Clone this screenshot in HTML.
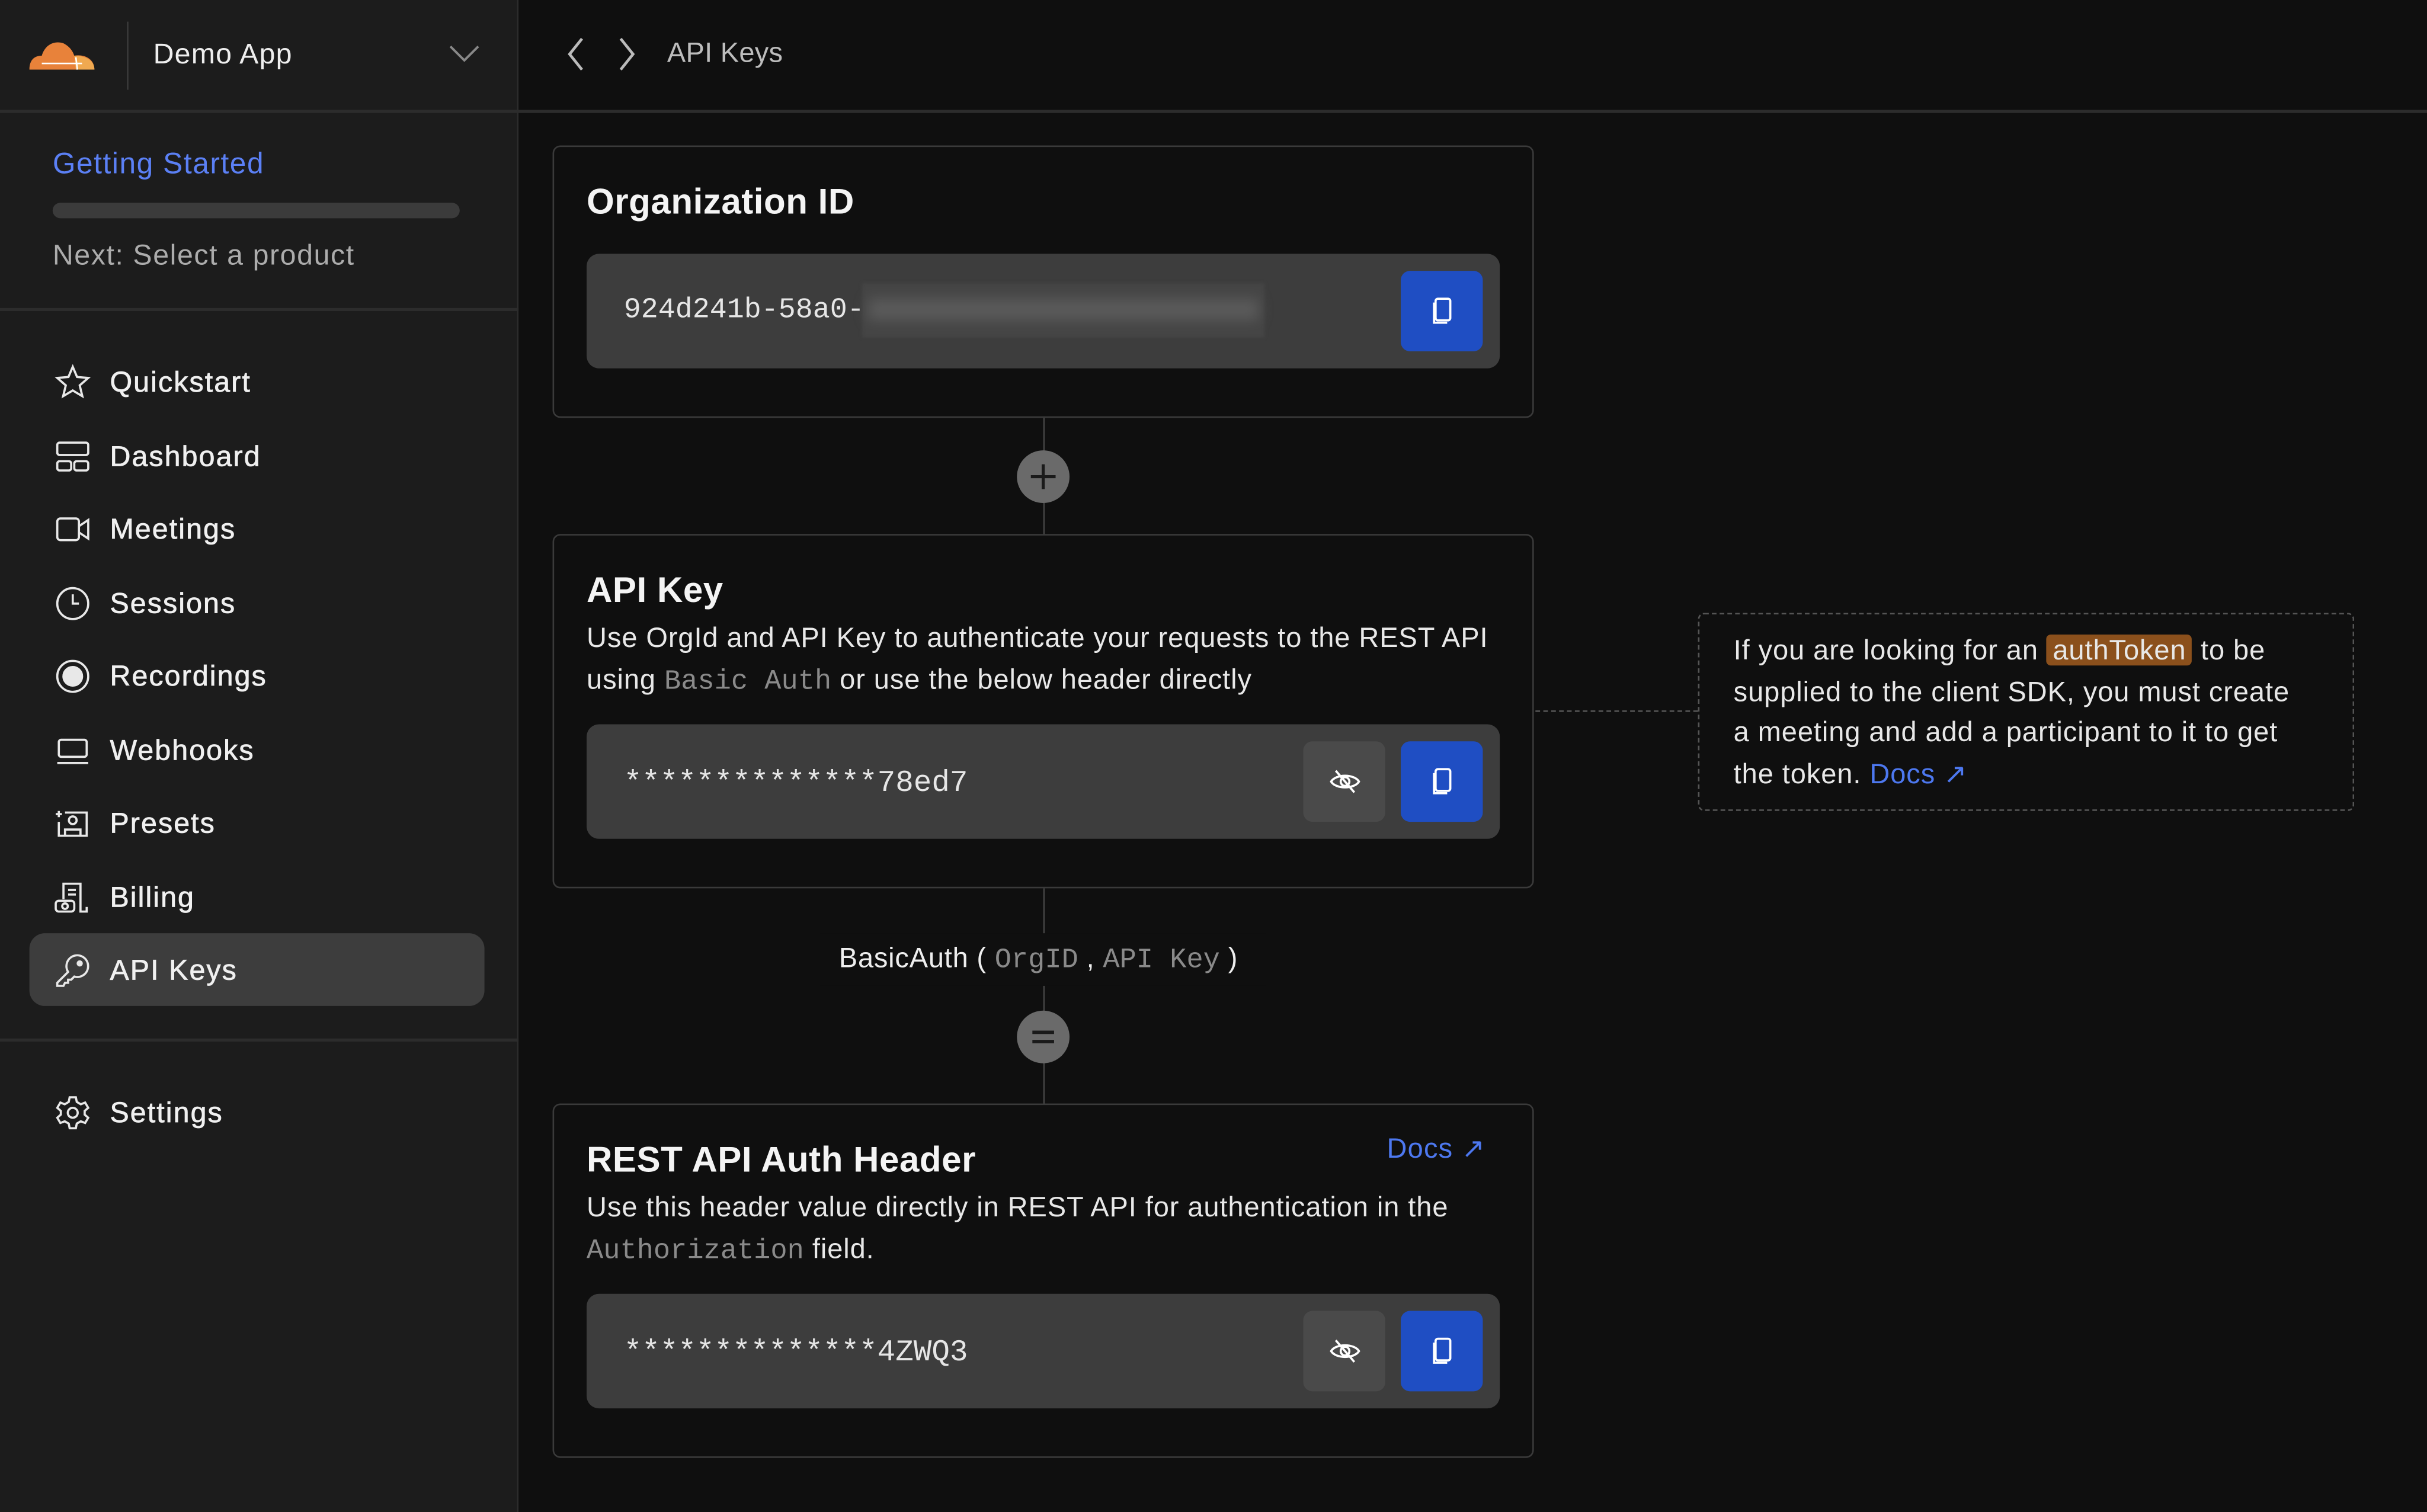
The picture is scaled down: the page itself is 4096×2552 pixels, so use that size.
<!DOCTYPE html>
<html><head><meta charset="utf-8"><style>
*{margin:0;padding:0;box-sizing:border-box}
html,body{width:4096px;height:2550px;overflow:hidden;background:#0f0f0f}
#w{position:absolute;left:0;top:0;width:1568px;height:977px;transform:scale(2.6122);transform-origin:0 0;font-family:"Liberation Sans",sans-serif;color:#eee;letter-spacing:0.45px}
.a{position:absolute}
.sb{left:0;top:0;width:335px;height:977px;background:#1c1c1c;border-right:1px solid #2c2c2c}
.hl{height:2px;background:#2c2c2c}
.nav{left:0;width:335px;height:47px;display:flex;align-items:center}
.nav svg{position:absolute;left:35px;width:24px;height:24px;fill:none;stroke:#e8e8e8;stroke-width:1.4}
.nav span{position:absolute;left:71px;font-size:18.5px;letter-spacing:0.8px;color:#f0f0f0;-webkit-text-stroke:0.3px #f0f0f0}
.card{left:357px;width:634px;border:1.5px solid #3a3a3a;border-radius:5px;background:#0f0f0f}
.t{font-size:23px;font-weight:bold;color:#f4f4f4;letter-spacing:0.2px}
.f{left:379px;width:590px;height:74px;background:#3d3d3d;border-radius:8px}
.mono{font-family:"Liberation Mono",monospace;letter-spacing:0}
.val{position:absolute;left:24px;top:26px;font-size:18.5px;color:#e6e6e6}
.btn{position:absolute;top:11px;width:53px;height:52px;border-radius:6px;display:flex;align-items:center;justify-content:center}
.cp{left:526px;background:#1f4ec3}
.ey{left:463px;background:#4a4a4a}
.btn svg{width:24px;height:24px;fill:none;stroke:#fff;stroke-width:1.4}
.d{font-size:18px;color:#e8e8e8;line-height:26.5px;letter-spacing:0.35px}
.g{color:#8a8a8a;font-family:"Liberation Mono",monospace;font-size:18px;letter-spacing:0}
.vl{left:673.5px;width:1.5px;background:#444}
.circ{left:657px;width:34px;height:34px;border-radius:50%;background:#6a6a6a}
</style></head><body><div id="w">
<div class="a sb"></div>
<div class="a" style="left:0;top:71px;width:1568px;height:1.5px;background:#2c2c2c"></div>
<svg class="a" style="left:17px;top:24px" width="46" height="22" viewBox="0 0 46 22"><path d="M2 21 C2 14 6 12 10 12 C12 5 18 2 24 4 C28 6 30 9 31 12 C36 11 44 13 44 21 Z" fill="#e8823a"/><path d="M31 12 C38 12 44 15 44 21 L32 21 Z" fill="#f0a950"/><path d="M10 17 H36 M32 13 L33 21" stroke="#fff" stroke-width="1"/></svg>
<div class="a" style="left:82px;top:14px;width:1px;height:44px;background:#3a3a3a"></div>
<div class="a" style="left:99px;top:24px;font-size:18.5px;color:#eee">Demo App</div>
<svg class="a" style="left:290px;top:29px" width="20" height="12" viewBox="0 0 20 12"><path d="M1 1 L10 10 L19 1" stroke="#888" stroke-width="1.5" fill="none"/></svg>
<svg class="a" style="left:364px;top:24px" width="50" height="22" viewBox="0 0 50 22"><path d="M12 1 L4 11 L12 21 M37 1 L45 11 L37 21" stroke="#bbb" stroke-width="1.8" fill="none"/></svg>
<div class="a" style="left:431px;top:24px;font-size:18px;color:#bdbdbd;letter-spacing:0.1px">API Keys</div>

<div class="a" style="left:34px;top:96px;font-size:19px;color:#5b80f5;letter-spacing:0.6px">Getting Started</div>
<div class="a" style="left:34px;top:131px;width:263px;height:10px;border-radius:5px;background:#3b3b3b"></div>
<div class="a" style="left:34px;top:154px;font-size:18.5px;color:#acacac;letter-spacing:0.6px">Next: Select a product</div>
<div class="a hl" style="left:0;top:199px;width:335px"></div>

<div class="a" style="left:19px;top:603px;width:294px;height:47px;border-radius:10px;background:#3d3d3d"></div>
<div class="a nav" style="top:223px"><svg viewBox="0 0 24 24"><path d="M12 2 L14.8 8.6 L22 9.2 L16.5 14 L18.2 21 L12 17.3 L5.8 21 L7.5 14 L2 9.2 L9.2 8.6 Z"/></svg><span>Quickstart</span></div>
<div class="a nav" style="top:271px"><svg viewBox="0 0 24 24"><rect x="2" y="3" width="20" height="8" rx="1.5"/><rect x="2" y="15" width="9" height="6" rx="1.5"/><rect x="13" y="15" width="9" height="6" rx="1.5"/></svg><span>Dashboard</span></div>
<div class="a nav" style="top:318px"><svg viewBox="0 0 24 24"><rect x="2" y="5" width="14" height="14" rx="2"/><path d="M16 10 L22 6 V18 L16 14"/></svg><span>Meetings</span></div>
<div class="a nav" style="top:366px"><svg viewBox="0 0 24 24"><circle cx="12" cy="12" r="10"/><path d="M12 6 V12 H16"/></svg><span>Sessions</span></div>
<div class="a nav" style="top:413px"><svg viewBox="0 0 24 24"><circle cx="12" cy="12" r="10"/><circle cx="12" cy="12" r="6" fill="#e8e8e8"/></svg><span>Recordings</span></div>
<div class="a nav" style="top:461px"><svg viewBox="0 0 24 24"><rect x="3" y="5" width="18" height="11" rx="1.5"/><path d="M2 20 H22"/></svg><span>Webhooks</span></div>
<div class="a nav" style="top:508px"><svg viewBox="0 0 24 24"><path d="M7 5 H21 V20 H3 V11 M1 6 H5 M3 4 V8"/><circle cx="12" cy="10" r="2.5"/><path d="M7 20 V16 H17 V20"/></svg><span>Presets</span></div>
<div class="a nav" style="top:556px"><svg viewBox="0 0 24 24"><path d="M6 13 V3 H17 V21 H21 V18 M9 7 H14 M9 10 H14"/><rect x="1" y="14" width="12" height="7" rx="2"/><circle cx="7" cy="17.5" r="1.8"/></svg><span>Billing</span></div>
<div class="a nav" style="top:603px"><svg viewBox="0 0 24 24"><path d="M9 13 L2 20 V22 H6 L7 20 H9 V18 H11 L13 16 A7 7 0 1 0 9 13 Z"/><circle cx="16.5" cy="7.5" r="1.3" fill="#e8e8e8"/></svg><span>API Keys</span></div>
<div class="a hl" style="left:0;top:671px;width:335px"></div>
<div class="a nav" style="top:695px"><svg viewBox="0 0 24 24"><circle cx="12" cy="12" r="3.2"/><path d="M10 2 H14 L14.6 5 L17.2 6.5 L20 5.4 L22 8.8 L19.7 10.8 V13.2 L22 15.2 L20 18.6 L17.2 17.5 L14.6 19 L14 22 H10 L9.4 19 L6.8 17.5 L4 18.6 L2 15.2 L4.3 13.2 V10.8 L2 8.8 L4 5.4 L6.8 6.5 L9.4 5 Z"/></svg><span>Settings</span></div>

<div class="a vl" style="top:270px;height:76px"></div>
<div class="a circ" style="top:291px"><svg width="34" height="34"><path d="M17 9 V25 M9 17 H25" stroke="#1a1a1a" stroke-width="2"/></svg></div>
<div class="a vl" style="top:574px;height:140px"></div>
<div class="a" style="left:530px;top:603px;width:288px;height:34px;background:#0f0f0f"></div>
<div class="a" style="left:542px;top:609px;font-size:18px;color:#eee;white-space:nowrap;letter-spacing:0.3px">BasicAuth ( <span class="g">OrgID</span> , <span class="g">API Key</span> )</div>
<div class="a circ" style="top:653px"><svg width="34" height="34"><path d="M10 14 H24 M10 20 H24" stroke="#1a1a1a" stroke-width="2.2"/></svg></div>

<div class="a card" style="top:94px;height:176px"></div>
<div class="a t" style="left:379px;top:117px">Organization ID</div>
<div class="a f" style="top:164px"><div class="val mono">924d241b-58a0-</div>
<div class="a" style="left:178px;top:19px;width:260px;height:35px;background:#454545;filter:blur(1px)"><div style="margin:10px 4px;height:14px;background:#5a5a5a;filter:blur(4px)"></div></div>
<div class="btn cp"><svg viewBox="0 0 24 24"><rect x="7.5" y="4" width="9.5" height="14" rx="1.5"/><path d="M6.5 6.5 V19.5 H15"/></svg></div></div>

<div class="a card" style="top:345px;height:229px"></div>
<div class="a t" style="left:379px;top:368px">API Key</div>
<div class="a d" style="left:379px;top:399px;width:595px">Use OrgId and API Key to authenticate your requests to the REST API using <span class="g">Basic Auth</span> or use the below header directly</div>
<div class="a f" style="top:468px"><div class="val mono" style="font-size:19.5px;top:27px">**************78ed7</div>
<div class="btn ey"><svg viewBox="0 0 24 24"><path d="M3 12 C6 7 18 7 21 12 C18 17 6 17 3 12 Z"/><circle cx="12" cy="12" r="2.8"/><path d="M6 5 L18 19"/></svg></div>
<div class="btn cp"><svg viewBox="0 0 24 24"><rect x="7.5" y="4" width="9.5" height="14" rx="1.5"/><path d="M6.5 6.5 V19.5 H15"/></svg></div></div>

<div class="a card" style="top:713px;height:229px"></div>
<div class="a t" style="left:379px;top:736px">REST API Auth Header</div>
<div class="a" style="left:896px;top:732px;font-size:18px;color:#4d78f0">Docs ↗</div>
<div class="a d" style="left:379px;top:767px;width:595px">Use this header value directly in REST API for authentication in the <span class="g">Authorization</span> field.</div>
<div class="a f" style="top:836px"><div class="val mono" style="font-size:19.5px;top:27px">**************4ZWQ3</div>
<div class="btn ey"><svg viewBox="0 0 24 24"><path d="M3 12 C6 7 18 7 21 12 C18 17 6 17 3 12 Z"/><circle cx="12" cy="12" r="2.8"/><path d="M6 5 L18 19"/></svg></div>
<div class="btn cp"><svg viewBox="0 0 24 24"><rect x="7.5" y="4" width="9.5" height="14" rx="1.5"/><path d="M6.5 6.5 V19.5 H15"/></svg></div></div>

<div class="a" style="left:992px;top:459px;width:105px;border-top:1.5px dashed #555"></div>
<div class="a" style="left:1097px;top:396px;width:424px;height:128px;border:1.5px dashed #555;border-radius:4px"></div>
<div class="a d" style="left:1120px;top:407px;width:372px">If you are looking for an <span style="background:#8b501c;padding:0 4px;border-radius:3px">authToken</span> to be supplied to the client SDK, you must create a meeting and add a participant to it to get the token. <span style="color:#4d78f0">Docs ↗</span></div>
</div></body></html>
